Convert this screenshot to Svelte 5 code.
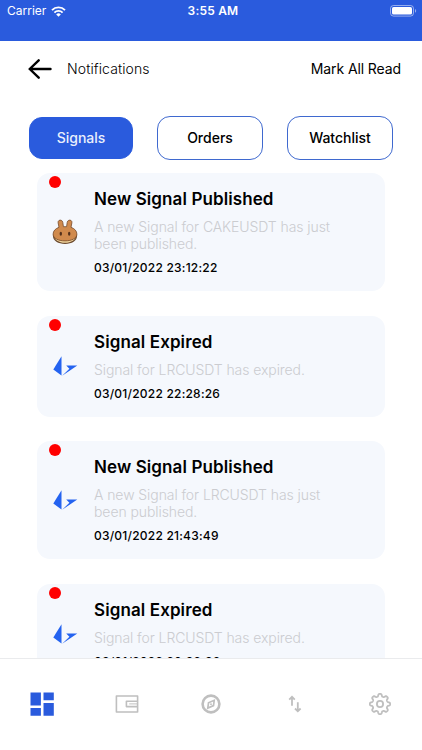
<script>
  const tabs = ['Signals', 'Orders', 'Watchlist'];
  let activeTab = 'Signals';

  const notifications = [
    {
      coin: 'cake',
      title: 'New Signal Published',
      message: 'A new Signal for CAKEUSDT has just been published.',
      date: '03/01/2022 23:12:22'
    },
    {
      coin: 'lrc',
      title: 'Signal Expired',
      message: 'Signal for LRCUSDT has expired.',
      date: '03/01/2022 22:28:26'
    },
    {
      coin: 'lrc',
      title: 'New Signal Published',
      message: 'A new Signal for LRCUSDT has just been published.',
      date: '03/01/2022 21:43:49'
    },
    {
      coin: 'lrc',
      title: 'Signal Expired',
      message: 'Signal for LRCUSDT has expired.',
      date: '03/01/2022 20:32:38'
    }
  ];

  // eight rounded teeth around the centre of a 24px box
  function gearPath() {
    const points = [];
    for (let i = 0; i < 160; i++) {
      const a = (i / 160) * Math.PI * 2;
      const wave = Math.tanh(2 * Math.cos(8 * a)) / Math.tanh(2);
      const r = 8.9 + 1.2 * wave;
      points.push(`${(12 + r * Math.sin(a)).toFixed(2)} ${(12 - r * Math.cos(a)).toFixed(2)}`);
    }
    return `M${points.join('L')}Z`;
  }
</script>

<div class="screen">
  <div class="status-bar">
    <div class="carrier">
      <span>Carrier</span>
      <svg width="15" height="11" viewBox="0 0 15 11" fill="none" stroke="#fff" stroke-width="1.9">
        <path d="M1 4.1a9.2 9.2 0 0 1 13 0" />
        <path d="M3.4 6.6a5.8 5.8 0 0 1 8.2 0" />
        <path d="M7.5 10.8 5.2 8.5a3.2 3.2 0 0 1 4.6 0Z" fill="#fff" stroke="none" />
      </svg>
    </div>
    <span class="time">3:55 AM</span>
    <div class="battery">
      <svg width="27" height="12" viewBox="0 0 27 12">
        <rect x="0.5" y="0.5" width="23" height="10.6" rx="3" fill="none" stroke="#fff" stroke-opacity="0.5" />
        <rect x="2" y="2" width="20" height="7.6" rx="1.6" fill="#fff" />
        <path d="M25 3.9c1.6.5 1.6 3.3 0 3.8Z" fill="#fff" fill-opacity="0.5" />
      </svg>
    </div>
  </div>

  <header class="header">
    <button class="back" type="button" aria-label="Back">
      <svg width="24" height="20" viewBox="0 0 24 20" fill="none" stroke="#000" stroke-width="2.4" stroke-linecap="round" stroke-linejoin="round">
        <path d="M22.5 10H1.7M10.7 1.3 1.7 10l9 8.7" />
      </svg>
    </button>
    <h1>Notifications</h1>
    <button class="mark-read" type="button">Mark All Read</button>
  </header>

  <div class="tabs">
    {#each tabs as tab}
      <button
        class="tab"
        class:active={activeTab === tab}
        on:click={() => activeTab = tab}
        type="button"
      >{tab}</button>
    {/each}
  </div>

  <main class="list">
    {#each notifications as item}
      <article class="card">
        <span class="unread"></span>
        <div class="coin">
          {#if item.coin === 'cake'}
            <svg width="26" height="26" viewBox="0 0 26 26">
              <path d="M1 15.3v2c0 4.3 5 7.7 12 7.7s12-3.4 12-7.7v-2Z" fill="#6b4a2e" />
              <path d="M1.8 16.5c.5 4.2 5 7.3 11.2 7.3s10.7-3.1 11.2-7.3Z" fill="#f5d9a0" />
              <path d="M7 8.300 6.100 3.800C5.600.4 10.300.2 10.800 3.400l.6 4.300h3.200l.6-4.300C15.700.2 20.400.4 19.900 3.800L19 8.300c3.700 1.300 5.900 3.800 5.900 6.900 0 3.900-4.800 6.700-11.900 6.700S1.100 19.100 1.100 15.200c0-3.100 2.200-5.600 5.900-6.900Z" fill="#d08a4d" stroke="#75492a" stroke-width="0.800" />
              <ellipse cx="8.800" cy="14.800" rx="1.200" ry="2" fill="#53301b" />
              <ellipse cx="17.200" cy="14.800" rx="1.200" ry="2" fill="#53301b" />
            </svg>
          {:else}
            <svg width="26" height="26" viewBox="0 0 26 26" fill="#2463f0">
              <path d="M9.500 3.200v19.300L1.300 16.600Z" />
              <path d="M14.200 12.600H25.300L10.200 22.700 17.400 15.700Z" />
            </svg>
          {/if}
        </div>
        <div class="content">
          <h2>{item.title}</h2>
          <p>{item.message}</p>
          <time>{item.date}</time>
        </div>
      </article>
    {/each}
  </main>

  <nav class="bottom-nav">
    <button type="button" aria-label="Dashboard">
      <svg width="24" height="24" viewBox="0 0 24 24" fill="#2a5bdd">
        <path d="M.5.4h10.400v13H.5ZM13.500.4h10.300v7.900H13.500ZM.5 16h10.400v7.700H.5ZM13.500 10.900h10.300v12.800H13.500Z" />
      </svg>
    </button>
    <button type="button" aria-label="Wallet">
      <svg width="24" height="24" viewBox="0 0 24 24" fill="none" stroke="#bfbfbf" stroke-width="1.6" stroke-linejoin="round">
        <path d="M1.400 4h21.200v16H1.400Z" />
        <path d="M22.600 9.300H11.400v5.300h11.200" />
        <path d="M14.200 11.900h8.400" stroke-width="1" />
      </svg>
    </button>
    <button type="button" aria-label="Discover">
      <svg width="24" height="24" viewBox="0 0 24 24" fill="none" stroke="#bfbfbf">
        <circle cx="12" cy="12" r="8.400" stroke-width="2.600" />
        <path d="m15.200 8.300-.7 5.300-5.700 2.500.7-5.300Z" stroke-width="1.700" />
        <circle cx="12" cy="12.200" r="0.900" fill="#bfbfbf" stroke="none" />
      </svg>
    </button>
    <button type="button" aria-label="Trades">
      <svg width="24" height="24" viewBox="0 0 24 24" fill="none" stroke="#bfbfbf" stroke-width="1.800">
        <path d="M9 13.800V5M6.200 7.600 9 4.800l2.800 2.800M14.800 10.300v8.700M12 16.500l2.800 2.800 2.800-2.800" />
      </svg>
    </button>
    <button type="button" aria-label="Settings">
      <svg width="24" height="24" viewBox="0 0 24 24" fill="none" stroke="#bfbfbf" stroke-width="1.800">
        <path d={gearPath()} />
        <circle cx="12" cy="12" r="3.100" />
      </svg>
    </button>
  </nav>
</div>

<style>
  :global(body) {
    margin: 0;
    background: #fff;
  }

  .screen {
    display: flex;
    flex-direction: column;
    width: 422px;
    height: 750px;
    overflow: hidden;
    background: #fff;
    color: #000;
    font-family: Inter, "Liberation Sans", sans-serif;
  }

  button {
    padding: 0;
    border: none;
    background: none;
    color: inherit;
    font-family: inherit;
    cursor: pointer;
  }

  svg {
    display: block;
  }

  .status-bar {
    display: grid;
    grid-template-columns: 1fr auto 1fr;
    align-items: center;
    align-content: start;
    flex: none;
    box-sizing: border-box;
    height: 41px;
    padding: 3px 5px 0 7px;
    background: #2a5bdd;
    color: #fff;
    font-size: 12px;
    line-height: 16px;
  }

  .carrier {
    display: flex;
    align-items: center;
    gap: 5px;
    letter-spacing: 0;
  }

  .time {
    padding-left: 2px;
    font-weight: 600;
    letter-spacing: 0.2px;
  }

  .battery {
    justify-self: end;
  }

  .header {
    display: flex;
    align-items: center;
    flex: none;
    height: 55px;
    padding: 0 21px 0 28px;
  }

  .header h1 {
    margin: 0 auto 0 15px;
    font-size: 14px;
    font-weight: 300;
    letter-spacing: 0.1px;
  }

  .mark-read {
    font-size: 14px;
    letter-spacing: -0.1px;
  }

  .tabs {
    display: flex;
    align-items: center;
    justify-content: space-between;
    flex: none;
    height: 44px;
    padding: 0 29px;
    margin-top: 20px;
  }

  .tab {
    box-sizing: border-box;
    width: 106px;
    height: 44px;
    padding-bottom: 1px;
    border: 1px solid #3f69cf;
    border-radius: 13px;
    font-size: 14px;
    font-weight: 500;
  }

  .tab.active {
    width: 104px;
    height: 42px;
    border-color: #2a5bdd;
    background: #2a5bdd;
    color: #e9effc;
  }

  .list {
    display: flex;
    flex-direction: column;
    gap: 24.6px;
    flex: 1;
    min-height: 0;
    padding: 13px 37px 0;
    overflow: hidden;
  }

  .card {
    position: relative;
    display: flex;
    align-items: center;
    flex: none;
    box-sizing: border-box;
    padding: 15px 40px 15px 15px;
    border-radius: 13px;
    background: #f5f8fd;
  }

  .unread {
    position: absolute;
    top: 3px;
    left: 12px;
    width: 12px;
    height: 12px;
    border-radius: 50%;
    background: #f00;
  }

  .coin {
    flex: none;
    width: 42px;
  }

  .content {
    flex: 1;
  }

  h2 {
    margin: 0;
    font-size: 17px;
    font-weight: 600;
    line-height: 22px;
    letter-spacing: 0.1px;
  }

  p {
    margin: 8px 0;
    color: #cbccd0;
    font-size: 14px;
    font-weight: 300;
    line-height: 17px;
    letter-spacing: -0.08px;
  }

  time {
    display: block;
    font-size: 12px;
    font-weight: 500;
    line-height: 16px;
    letter-spacing: 0.22px;
  }

  .bottom-nav {
    display: flex;
    align-items: center;
    flex: none;
    box-sizing: border-box;
    height: 92px;
    padding-bottom: 1px;
    border-top: 1px solid #eaebed;
    background: #fff;
  }

  .bottom-nav button {
    display: flex;
    justify-content: center;
    flex: 1;
  }
</style>
